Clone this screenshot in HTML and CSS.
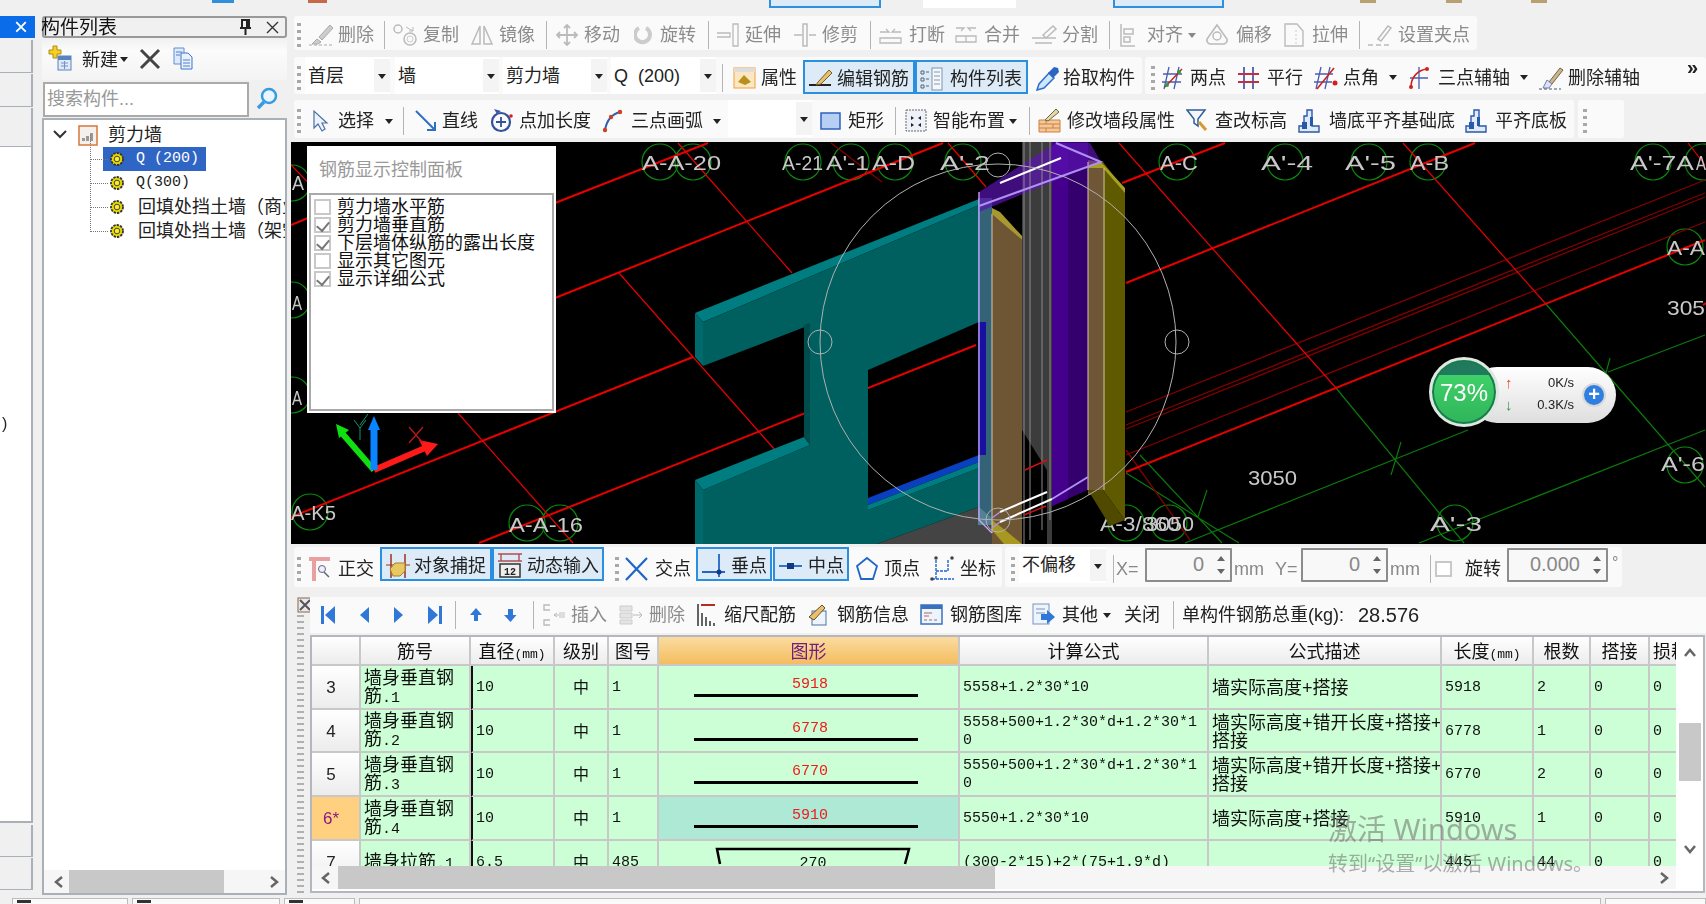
FILE: index.html
```html
<!DOCTYPE html>
<html lang="zh">
<head>
<meta charset="utf-8">
<title>构件列表</title>
<link rel="stylesheet" href="styles.css">
</head>
<body>
<svg class="defs" width="0" height="0">
  <symbol id="gear" viewBox="0 0 16 16"><circle cx="8" cy="8" r="6" fill="#e8d800" stroke="#333" stroke-width="1.800" stroke-dasharray="2.400 1"/><circle cx="8" cy="8" r="2.800" fill="#f7f020" stroke="#444"/></symbol>
</svg>
<div class="app">
  <div class="topstrip">
    <i class="tb-blue"></i><i class="tb-red"></i><i class="tb-sel a"></i><i class="tb-white"></i><i class="tb-sel b"></i><i class="tb-bit c"></i><i class="tb-bit d"></i><i class="tb-bit e"></i>
  </div>
  <div class="main">
    <div class="col-a">
      <div class="a-title"><span>×</span></div>
      <div class="a-box h33"></div>
      <div class="a-box h33"></div>
      <div class="a-box h39"></div>
      <div class="a-white"><span class="a-paren">)</span></div>
      <div class="a-box h32"></div>
      <div class="a-box h32"></div>
    </div>

    <div class="col-b">
      <div class="b-title"><span>构件列表</span>
        <svg width="16" height="18" viewBox="0 0 16 18" class="pin"><path d="M4 2h7v8H4zM2 10h11M7.500 10v7" fill="none" stroke="#222" stroke-width="2"/><path d="M8 3h2v6H8z" fill="#222"/></svg>
        <svg width="13" height="13" viewBox="0 0 13 13" class="closex"><path d="M1 1l11 11M12 1L1 12" stroke="#333" stroke-width="1.400"/></svg>
      </div>
      <div class="b-tools">
        <svg width="29" height="30" viewBox="0 0 29 30"><path d="M6 2h4v4h4v4h-4v4H6v-4H2V6h4z" fill="#f5d020" stroke="#b08a10"/><rect x="11" y="12" width="13" height="14" fill="#dfe9f7" stroke="#5a82bf"/><rect x="11" y="12" width="13" height="4" fill="#5a82bf"/><path d="M14 19h7M14 22h7M17.500 17v8" stroke="#6f93c8"/></svg>
        <span class="b-new">新建</span><i class="caret"></i>
        <svg class="b-x" width="22" height="24" viewBox="0 0 22 24"><path d="M2 3l18 18M20 3L2 21" stroke="#444" stroke-width="3"/></svg>
        <svg class="b-doc" width="24" height="24" viewBox="0 0 24 24"><path d="M2 1h10v16H2z" fill="#dfe9fb" stroke="#5f8fd0"/><path d="M9 6h7l4 4v12H9z" fill="#eaf1fd" stroke="#3f74c8"/><path d="M4 5h6M4 8h4M11 13h7M11 16h7M11 19h7" stroke="#4f80cc"/></svg>
      </div>
      <div class="b-search">
        <div class="search-box">搜索构件...</div>
        <svg width="24" height="26" viewBox="0 0 24 26"><circle cx="14" cy="10" r="7" fill="#eaf6ff" stroke="#3a9ae0" stroke-width="2.500"/><path d="M9 16l-6 6" stroke="#3a9ae0" stroke-width="3.500"/></svg>
      </div>
      <div class="tree">
        <div class="tree-body">
          <div class="root">
            <svg width="14" height="10" viewBox="0 0 14 10"><path d="M1 1l6 6 6-6" fill="none" stroke="#333" stroke-width="2"/></svg>
            <svg class="root-ic" width="21" height="21" viewBox="0 0 21 21"><rect x="1" y="1" width="18" height="19" fill="#f4f1ec" stroke="#d8773a" stroke-width="1.500"/><path d="M4 16h3v-3H4zM8 16h3v-5H8zM12 16h3v-8h-3zM5 11h2M9 7h2" fill="#999"/></svg>
            <span>剪力墙</span>
          </div>
          <div class="leaf sel"><svg width="16" height="16"><use href="#gear"/></svg><span class="mono">Q (200)</span></div>
          <div class="leaf"><svg width="16" height="16"><use href="#gear"/></svg><span class="mono">Q(300)</span></div>
          <div class="leaf wide"><svg width="16" height="16"><use href="#gear"/></svg><span>回填处挡土墙（商业）</span></div>
          <div class="leaf wide"><svg width="16" height="16"><use href="#gear"/></svg><span>回填处挡土墙（架空）</span></div>
        </div>
        <div class="hbar tree-bar">
          <svg width="12" height="14" viewBox="0 0 12 14"><path d="M9 2L3 7l6 5" fill="none" stroke="#666" stroke-width="2.500"/></svg>
          <i class="thumb"></i>
          <svg width="12" height="14" viewBox="0 0 12 14"><path d="M3 2l6 5-6 5" fill="none" stroke="#666" stroke-width="2.500"/></svg>
        </div>
      </div>
    </div>

    <div class="col-c">
      <div class="row row1">
        <div class="seg s1">
          <i class="grip"></i>
          <span class="t off m7"><svg width="30" height="24" viewBox="0 0 30 24"><path d="M11 14L22 2l3 3-11 12zM9 16l4 3-3 2H4z" fill="#ccc" stroke="#aaa"/><path d="M1 22h24" stroke="#aaa" stroke-dasharray="3 2"/></svg>删除</span>
          <i class="sep m10"></i>
          <span class="t off m7"><svg width="31" height="24" viewBox="0 0 31 24"><circle cx="6" cy="6" r="4" fill="none" stroke="#bbb" stroke-width="1.500"/><circle cx="18" cy="16" r="6" fill="none" stroke="#bbb" stroke-width="1.500"/><circle cx="18" cy="16" r="3" fill="none" stroke="#ccc"/><path d="M14 4l7 4M21 4v4h-4" fill="none" stroke="#bbb"/></svg>复制</span>
          <span class="t off m12"><svg width="28" height="24" viewBox="0 0 28 24"><path d="M1 21L9 3v18zM21 21L13 3v18z" fill="none" stroke="#bbb" stroke-width="1.500"/></svg>镜像</span>
          <i class="sep m11"></i>
          <span class="t off m9"><svg width="28" height="24" viewBox="0 0 28 24"><path d="M11 2v20M1 12h20M8 5l3-3 3 3M8 19l3 3 3-3M4 9l-3 3 3 3M18 9l3 3-3 3" fill="none" stroke="#bbb" stroke-width="1.800"/></svg>移动</span>
          <span class="t off m14"><svg width="26" height="24" viewBox="0 0 26 24"><path d="M5 5a7.500 7.500 0 1 0 7 0" fill="none" stroke="#ccc" stroke-width="4"/></svg>旋转</span>
          <i class="sep m12"></i>
          <span class="t off m8"><svg width="28" height="24" viewBox="0 0 28 24"><path d="M0 10h13v4H0M16 1h5v22h-5z" fill="none" stroke="#bbb" stroke-width="1.300"/></svg>延伸</span>
          <span class="t off m13"><svg width="28" height="24" viewBox="0 0 28 24"><path d="M9 1h4v22H9zM0 12h8M15 12h7" fill="none" stroke="#bbb" stroke-width="1.500"/></svg>修剪</span>
          <i class="sep m12"></i>
          <span class="t off m8"><svg width="30" height="24" viewBox="0 0 30 24"><path d="M1 9h9l-3-3M22 9h-9l3-3M1 15h21v5H1z" fill="none" stroke="#bbb" stroke-width="1.300"/></svg>打断</span>
          <span class="t off m10"><svg width="29" height="24" viewBox="0 0 29 24"><path d="M1 5h8l-3 3M21 5h-8l3 3M1 13h20v6H1zM11 13v6" fill="none" stroke="#bbb" stroke-width="1.300"/></svg>合并</span>
          <span class="t off m11"><svg width="31" height="24" viewBox="0 0 31 24"><path d="M1 15h24M4 20h17M12 12L22 3l3 3-10 9z" fill="none" stroke="#bbb" stroke-width="1.500"/></svg>分割</span>
          <i class="sep m11"></i>
          <span class="t off m10"><svg width="27" height="24" viewBox="0 0 27 24"><path d="M1 1v22h14M4 6h9v5H4zM4 14h6v5H4z" fill="none" stroke="#bbb" stroke-width="1.500"/></svg>对齐</span><i class="caret off-c m5"></i>
          <span class="t off m10"><svg width="30" height="24" viewBox="0 0 30 24"><path d="M11 2l10 14a4 4 0 0 1-3 5H4a4 4 0 0 1-3-5z" fill="none" stroke="#bbb" stroke-width="1.600"/><circle cx="11" cy="13" r="4" fill="none" stroke="#bbb" stroke-width="1.500"/></svg>偏移</span>
          <span class="t off m12"><svg width="28" height="24" viewBox="0 0 28 24"><path d="M1 1h12l6 7v15H1z" fill="none" stroke="#bbb" stroke-width="1.400"/><path d="M12 7v14" stroke="#ccc" stroke-dasharray="2 2"/></svg>拉伸</span>
          <i class="sep m11"></i>
          <span class="t off m8"><svg width="30" height="24" viewBox="0 0 30 24"><path d="M10 16L20 3l3 2-10 13zM0 22h5M8 22h5M16 22h5" fill="none" stroke="#bbb" stroke-width="1.500"/></svg>设置夹点</span>
        </div>
      </div>

      <div class="row row2">
        <div class="seg s2a">
          <i class="grip"></i>
          <span class="combo c85 m4">首层<i class="drop"></i></span>
          <span class="combo c104 m5">墙<i class="drop"></i></span>
          <span class="combo c104 m4">剪力墙<i class="drop"></i></span>
          <span class="combo c105 m4">Q&nbsp; (200)<i class="drop"></i></span>
          <i class="sep m6"></i>
          <span class="t m10"><svg width="28" height="24" viewBox="0 0 28 24"><rect x="1" y="2" width="21" height="20" fill="#fde7c0" stroke="#f0a040"/><rect x="1" y="2" width="21" height="4" fill="#ddd"/><path d="M5 16l6-7 7 7-6 3z" fill="#b89020"/></svg>属性</span>
          <span class="t btn w112 m6"><svg width="29" height="24" viewBox="0 0 29 24"><path d="M1 18h22" stroke="#222" stroke-width="2"/><path d="M10 15L21 3l3 3-11 11-5 1z" fill="#e5c070" stroke="#7a6020"/></svg>编辑钢筋</span>
          <span class="t btn w113"><svg width="30" height="24" viewBox="0 0 30 24"><rect x="12" y="1" width="10" height="22" fill="#f4f7fb" stroke="#7f94ae"/><path d="M14 5h6M14 9h6M14 13h6M14 17h6" stroke="#89a"/><path d="M1 4h3v3H1zM6 5h3M1 11h3v3H1zM6 12h3M1 18h3v3H1zM6 19h3" fill="none" stroke="#567"/></svg>构件列表</span>
          <span class="t m8"><svg width="27" height="26" viewBox="0 0 27 26"><path d="M1 25l2-6L13 8l5 5L8 23z" fill="#cfe6ff" stroke="#2f6fc8" stroke-width="1.500"/><path d="M12 8l6-6 4 1 1 4-6 6z" fill="#2a65c0"/></svg>拾取构件</span>
        </div>
        <div class="seg s2b">
          <i class="grip"></i>
          <span class="t m7"><svg width="28" height="24" viewBox="0 0 28 24"><path d="M7 1L2 23M17 1l-5 22M1 8h19M0 16h19" stroke="#4a5db0" stroke-width="1.300"/><path d="M20 3L3 21" stroke="#c52020" stroke-width="1.400"/><circle cx="17" cy="6" r="2" fill="#3a9a30"/><circle cx="5" cy="19" r="2" fill="#3a9a30"/></svg>两点</span>
          <span class="t m12"><svg width="29" height="24" viewBox="0 0 29 24"><path d="M6 1v22M15 1v22" stroke="#4a5db0" stroke-width="1.800"/><path d="M0 8h21M0 16h21" stroke="#c03040" stroke-width="1.800"/></svg>平行</span>
          <span class="t m11"><svg width="29" height="24" viewBox="0 0 29 24"><path d="M7 1L2 23M16 1l-5 22M1 8h18M0 16h18" stroke="#4a5db0" stroke-width="1.300"/><path d="M20 2L3 23" stroke="#d02020" stroke-width="1.600"/><circle cx="21" cy="17" r="2.500" fill="#d02020"/></svg>点角</span><i class="caret m10"></i>
          <span class="t m11"><svg width="30" height="24" viewBox="0 0 30 24"><path d="M11 1v22M2 12h18" stroke="#4a5db0" stroke-width="1.300"/><path d="M3 21C3 11 10 4 19 3" fill="none" stroke="#d02020" stroke-width="1.600"/><circle cx="19" cy="3" r="2" fill="#d02020"/><circle cx="3" cy="21" r="2" fill="#d02020"/></svg>三点辅轴</span><i class="caret m10"></i>
          <span class="t m10"><svg width="30" height="26" viewBox="0 0 30 26"><path d="M11 17L22 3l3 2-11 14z" fill="#c8b890" stroke="#806040"/><path d="M9 15l5 4-3 4H5z" fill="#e0e0f0" stroke="#6a80b0"/><path d="M1 24h22" stroke="#456" stroke-dasharray="3 2"/></svg>删除辅轴</span>
          <span class="more">»</span>
        </div>
      </div>

      <div class="row row3">
        <div class="seg s3a">
          <i class="grip"></i>
          <span class="t m12"><svg width="25" height="24" viewBox="0 0 25 24"><path d="M1 2v17l4-4 4 7 3-2-3-6h5z" fill="#eef3fb" stroke="#4a70a8" stroke-width="1.200"/></svg>选择</span><i class="caret m11"></i>
          <i class="sep m10"></i>
          <span class="t m11"><svg width="27" height="24" viewBox="0 0 27 24"><path d="M1 2l19 19M20 13v8h-8" fill="none" stroke="#2f6fc0" stroke-width="2"/></svg>直线</span>
          <span class="t m11"><svg width="30" height="26" viewBox="0 0 30 26"><circle cx="12" cy="14" r="9" fill="none" stroke="#33509a" stroke-width="2.200"/><path d="M12 9v10M7 14h10" stroke="#33509a" stroke-width="1.800"/><path d="M5 1l3 5 4-3" fill="#3a5aa8"/><circle cx="22" cy="8" r="1.800" fill="#d02020"/></svg>点加长度</span>
          <span class="t m11"><svg width="29" height="24" viewBox="0 0 29 24"><path d="M3 21C5 10 10 5 18 3" fill="none" stroke="#2f5fb0" stroke-width="2"/><circle cx="3" cy="21" r="2.200" fill="#d04020"/><circle cx="9" cy="8" r="2.200" fill="#d04020"/><circle cx="18" cy="3" r="2.200" fill="#d04020"/></svg>三点画弧</span><i class="caret m10"></i>
          <span class="combo c84 m7"><i class="drop"></i></span>
          <span class="t m7"><svg width="29" height="24" viewBox="0 0 29 24"><rect x="2" y="4" width="19" height="16" fill="#b8cff4" stroke="#2f60c0" stroke-width="1.500"/></svg>矩形</span>
          <i class="sep m11"></i>
          <span class="t m9"><svg width="28" height="24" viewBox="0 0 28 24"><rect x="1" y="1" width="20" height="21" fill="#eef2f8" stroke="#666" stroke-dasharray="2 1"/><path d="M6 7l3 2-3 2zM16 7l-3 2 3 2zM6 14l3 2-3 2zM16 14l-3 2 3 2z" fill="#223"/></svg>智能布置</span><i class="caret m4"></i>
          <i class="sep m12"></i>
          <span class="t m8"><svg width="29" height="26" viewBox="0 0 29 26"><path d="M1 12h21v12H1z" fill="#f4c89a" stroke="#d08040"/><path d="M1 16h21M1 20h21M8 12v4M15 16v4M8 20v4" stroke="#d08040"/><path d="M7 12L18 1l3 3-11 9z" fill="#e8d8a0" stroke="#665"/></svg>修改墙段属性</span>
          <span class="t m11"><svg width="29" height="26" viewBox="0 0 29 26"><path d="M1 2h18l-7 9v7l-4-3v-4z" fill="#f4f6fa" stroke="#2f5f9a" stroke-width="1.500"/><path d="M13 14l7 8" stroke="#d89830" stroke-width="3"/></svg>查改标高</span>
          <span class="t m11"><svg width="31" height="24" viewBox="0 0 31 24"><path d="M1 23v-6h5V7h3V1h5v16h7v6z" fill="#dfeafa" stroke="#2a58a8" stroke-width="1.400"/><path d="M4 13h5v7H4zM12 8h3v9h-3z" fill="#2a58a8"/></svg>墙底平齐基础底</span>
          <span class="t m10"><svg width="30" height="24" viewBox="0 0 30 24"><path d="M1 23v-6h5V7h3V1h5v16h7v6z" fill="#dfeafa" stroke="#2a58a8" stroke-width="1.400"/><path d="M4 13h5v7H4zM12 8h3v9h-3z" fill="#2a58a8"/></svg>平齐底板</span>
        </div>
        <div class="seg s3b"><i class="grip"></i></div>
      </div>

      <div class="canvas">
        <svg class="cad" width="1415" height="402" viewBox="291 142 1415 402">
          <g class="hex" fill="none" stroke="#0a8a0a" stroke-width="1.200">
            <circle cx="660" cy="162" r="18"/><circle cx="693" cy="162" r="18"/><circle cx="803" cy="162" r="18"/><circle cx="851" cy="162" r="18"/><circle cx="895" cy="162" r="18"/><circle cx="963" cy="162" r="18"/><circle cx="1177" cy="162" r="18"/><circle cx="1285" cy="162" r="18"/><circle cx="1369" cy="162" r="18"/><circle cx="1428" cy="162" r="18"/><circle cx="1653" cy="162" r="18"/><circle cx="1703" cy="162" r="18"/><circle cx="1685" cy="247" r="18"/><circle cx="1685" cy="465" r="18"/><circle cx="1455" cy="523" r="18"/><circle cx="1126" cy="523" r="18"/><circle cx="1169" cy="523" r="18"/><circle cx="527" cy="523" r="18"/><circle cx="560" cy="523" r="18"/><circle cx="310" cy="512" r="18"/><circle cx="292" cy="183" r="18"/><circle cx="292" cy="300" r="18"/><circle cx="292" cy="395" r="18"/>
          </g>
          <g fill="none" stroke="#0a7a0a" stroke-width="1.200">
            <path d="M1185 543L1468 430M1608 372L1705 335M1419 543L1705 430M1336 388L1464 543M1545 303L1705 487M1126 473L1239 543M1401 442L1391 475M1610 358L1606 373M1207 490L1198 517M1140 455L1222 543"/>
          </g>
          <g fill="none" stroke="#800000" stroke-width="1.300">
            <path d="M1126 412L1705 180M1126 425L1705 193M1126 429L1705 197M1126 455L1705 222M831 143L882 182M1126 450L1190 540"/>
          </g>
          <g fill="none" stroke="#e60000" stroke-width="2">
            <path d="M291 225L320 213M555 203L708 143M555 298L943 143M291 517L693 357M479 543L976 345M1122 183L1225 143M1126 283L1475 143M1126 472L1705 240M1703 305L1706 303"/>
          </g>
          <g fill="none" stroke="#e60000" stroke-width="1.200">
            <path d="M678 143L792 273M458 413L573 543M619 273L775 450M948 143L986 187M1119 143L1336 388M1403 143L1545 303M291 165L330 205M1688 143L1705 165"/>
          </g>
          <g class="lbl">
            <text x="642" y="170" textLength="79" lengthAdjust="spacingAndGlyphs">A-A-20</text>
            <text x="782" y="170" textLength="41" lengthAdjust="spacingAndGlyphs">A-21</text>
            <text x="826" y="170" textLength="43" lengthAdjust="spacingAndGlyphs">A'-1</text>
            <text x="872" y="170" textLength="43" lengthAdjust="spacingAndGlyphs">A-D</text>
            <text x="940" y="170" textLength="50" lengthAdjust="spacingAndGlyphs">A'-2</text>
            <text x="1160" y="170" textLength="38" lengthAdjust="spacingAndGlyphs">A-C</text>
            <text x="1261" y="170" textLength="52" lengthAdjust="spacingAndGlyphs">A'-4</text>
            <text x="1345" y="170" textLength="51" lengthAdjust="spacingAndGlyphs">A'-5</text>
            <text x="1410" y="170" textLength="39" lengthAdjust="spacingAndGlyphs">A-B</text>
            <text x="1630" y="170" textLength="64" lengthAdjust="spacingAndGlyphs">A'-7A</text>
            <text x="1696" y="170" textLength="10" lengthAdjust="spacingAndGlyphs">A</text>
            <text x="1667" y="255" textLength="38" lengthAdjust="spacingAndGlyphs">A-A</text>
            <text x="1667" y="315" textLength="38" lengthAdjust="spacingAndGlyphs">305</text>
            <text x="1661" y="471" textLength="44" lengthAdjust="spacingAndGlyphs">A'-6</text>
            <text x="1248" y="485" textLength="49" lengthAdjust="spacingAndGlyphs">3050</text>
            <text x="1100" y="531" textLength="80" lengthAdjust="spacingAndGlyphs">A-3/860</text>
            <text x="1146" y="531" textLength="48" lengthAdjust="spacingAndGlyphs">3050</text>
            <text x="1430" y="531" textLength="52" lengthAdjust="spacingAndGlyphs">A'-3</text>
            <text x="291" y="520" textLength="45" lengthAdjust="spacingAndGlyphs">A-K5</text>
            <text x="509" y="532" textLength="74" lengthAdjust="spacingAndGlyphs">A-A-16</text>
            <text x="292" y="190" textLength="12" lengthAdjust="spacingAndGlyphs">A</text>
            <text x="292" y="310" textLength="10" lengthAdjust="spacingAndGlyphs">A</text>
            <text x="292" y="405" textLength="10" lengthAdjust="spacingAndGlyphs">A</text>
          </g>
          <path d="M695 313L979 199V205L703 322Z" fill="#007d80"/>
          <path d="M703 322L979 205V322L868 370V510L979 468V507L877 544H703V490L810 445V325L703 366Z" fill="#005f5f"/>
          <path d="M695 313L703 322V366L695 357Z" fill="#00696b"/>
          <path d="M695 480L804 437L810 445L703 490Z" fill="#007d80"/>
          <path d="M695 480L703 490V544H695Z" fill="#00696b"/>
          <path d="M804 325L810 323V445L804 437Z" fill="#004c4d"/>
          <path d="M868 498L979 455V462L868 505Z" fill="#0a3fc0"/>
          <path d="M868 505L979 462V468L868 510Z" fill="#007d80"/>
          <path d="M877 544L979 507L1022 544Z" fill="#444"/>
          <path d="M1022 142H1052V544H1022Z" fill="#3c3c3c"/>
          <path d="M1022 430L1047 470V544H1022Z" fill="#000"/>
          <path d="M1052 142H1088V490L1052 506Z" fill="#34006e"/>
          <path d="M1052 142H1068V499L1052 506Z" fill="#44008c"/>
          <path d="M978 198H992V525H978Z" fill="#5fb4d8" fill-opacity=".55"/>
          <path d="M978 322H986V455H978Z" fill="#1a10a0"/>
          <path d="M992 212L1022 240V544H992Z" fill="#6e5533"/>
          <path d="M992 208L1000 212L1022 236V240L992 214Z" fill="#a89830"/>
          <path d="M992 520L1005 530L1022 544H1004L992 530Z" fill="#a89820"/>
          <path d="M1103 162L1125 190V520L1103 490Z" fill="#5f5a00"/>
          <path d="M1088 163H1103V495H1088Z" fill="#6e5636"/>
          <path d="M1088 160L1101 162L1125 188V193L1103 168H1088Z" fill="#a8a020"/>
          <path d="M1088 490L1103 490L1125 520L1110 526Z" fill="#4f4a00"/>
          <path d="M979 192L1056 143H1090L1101 162L979 212Z" fill="#5a12b0" fill-opacity=".7"/>
          <g fill="none">
            <path d="M1024 142V544M1030 142V540M1042 142V530M1050 142V520" stroke="#8a8a8a" stroke-width="1"/>
            <path d="M979 192V520L992 533" stroke="#c8a8ff" stroke-width="1.300"/>
            <path d="M992 214V533M1088 162V490M1104 168V490" stroke="#d8c8b0" stroke-width="1"/>
            <path d="M1000 183L1061 158" stroke="#fff" stroke-width="2"/>
            <path d="M979 206L1101 162L1056 143" stroke="#b090f0" stroke-width="2"/>
            <path d="M1000 512L1047 492" stroke="#fff" stroke-width="2"/>
            <path d="M1000 522L1052 499" stroke="#fff" stroke-width="2"/>
            <path d="M1052 499L1088 477" stroke="#b090f0" stroke-width="2"/>
            <path d="M992 518L1000 512M992 528L1000 522" stroke="#b090f0" stroke-width="1.500"/>
            <path d="M1024 515L1046 506M1025 470L1047 460" stroke="#d01010" stroke-width="1.400"/>
          </g>
          <g fill="none" stroke="#b0b0b0" stroke-width="1">
            <circle cx="998" cy="342" r="178"/>
            <circle cx="820" cy="342" r="12"/><circle cx="1177" cy="342" r="12"/>
            <circle cx="998" cy="165" r="12"/><circle cx="998" cy="520" r="12"/>
          </g>
          <path d="M374 470L341 432" stroke="#10e010" stroke-width="6"/><path d="M336 424L349 430L339 438Z" fill="#10e010"/>
          <path d="M374 470L425 448" stroke="#ff1a1a" stroke-width="6"/><path d="M438 444L419 440L427 456Z" fill="#ff1a1a"/>
          <path d="M374 470V428" stroke="#0a84ff" stroke-width="7"/><path d="M374 416L368 430H380Z" fill="#0a84ff"/>
          <path d="M409 427L423 443M423 427L409 443" stroke="#c01818" stroke-width="1.200"/>
          <path d="M354 420L360 428V440M366 420L360 428M368 414L360 425" fill="none" stroke="#0a9a70" stroke-width="1"/>
        </svg>

        <div class="panel">
          <div class="panel-title">钢筋显示控制面板</div>
          <div class="panel-list">
            <div class="chk"><i class="box"></i>剪力墙水平筋</div>
            <div class="chk"><i class="box on"></i>剪力墙垂直筋</div>
            <div class="chk"><i class="box on"></i>下层墙体纵筋的露出长度</div>
            <div class="chk"><i class="box"></i>显示其它图元</div>
            <div class="chk"><i class="box on"></i>显示详细公式</div>
          </div>
        </div>

        <div class="net">
          <div class="ball"><span>73%</span></div>
          <div class="speeds">
            <div class="sp"><b class="up">↑</b><span>0K/s</span></div>
            <div class="sp"><b class="dn">↓</b><span>0.3K/s</span></div>
          </div>
          <div class="plus">+</div>
        </div>
      </div>

      <div class="row row4">
        <div class="seg s4a">
          <i class="grip"></i>
          <span class="t m7"><svg width="30" height="26" viewBox="0 0 30 26"><path d="M1 3h21M6 3v22" stroke="#e8a0a0" stroke-width="4"/><circle cx="14" cy="13" r="3.500" fill="#eef" stroke="#667"/><path d="M16 16l5 5" stroke="#667" stroke-width="1.500"/></svg>正交</span>
          <span class="t btn w112 m6"><svg width="29" height="26" viewBox="0 0 29 26"><path d="M6 1v24M20 1v24" stroke="#a03020" stroke-width="1.500"/><path d="M1 12h24" stroke="#a03020"/><path d="M5 16l5-6h10v8l-5 5H8z" fill="#e8c860" stroke="#a08030"/></svg>对象捕捉</span>
          <span class="t btn w112"><svg width="30" height="26" viewBox="0 0 30 26"><path d="M1 1h24M1 8h24M4 1v7M22 1v7" stroke="#b05050" stroke-width="1.400"/><rect x="3" y="11" width="20" height="13" fill="#eee" stroke="#333" stroke-width="1.500"/><text x="7" y="22" class="svg12">12</text></svg>动态输入</span>
          <i class="grip m11"></i>
          <span class="t m6"><svg width="30" height="26" viewBox="0 0 30 26"><path d="M1 2l21 22M22 2L1 24" stroke="#1f66c8" stroke-width="2.200"/></svg>交点</span>
          <span class="t btn w76 m5"><svg width="30" height="26" viewBox="0 0 30 26"><path d="M1 19h23M18 1v23" stroke="#1f66c8" stroke-width="1.800"/><circle cx="18" cy="19" r="2.500" fill="#123a80"/></svg>垂点</span>
          <span class="t btn w76 m1"><svg width="30" height="26" viewBox="0 0 30 26"><path d="M1 13h23" stroke="#1f66c8" stroke-width="1.800"/><rect x="9" y="10" width="7" height="6" fill="#123a80"/></svg>中点</span>
          <span class="t m6"><svg width="29" height="26" viewBox="0 0 29 26"><path d="M12 2l10 8-4 13H6L2 10z" fill="none" stroke="#1f66c8" stroke-width="1.800"/></svg>顶点</span>
          <span class="t m10"><svg width="30" height="26" viewBox="0 0 30 26"><path d="M6 4v19M18 4v11M2 23h22M6 15h12" fill="none" stroke="#1f66c8" stroke-width="1.400" stroke-dasharray="3 1"/><circle cx="6" cy="2" r="1.800" fill="#444"/><circle cx="22" cy="2" r="1.800" fill="#444"/><circle cx="2" cy="23" r="1.800" fill="#444"/></svg>坐标</span>
        </div>
        <div class="seg s4b">
          <i class="grip"></i>
          <span class="combo c87 m4">不偏移<i class="drop"></i></span>
          <i class="sep m7"></i>
          <span class="lat w26 m2">X=</span>
          <span class="spin w87 m3"><span>0</span><i class="arrows"></i></span>
          <span class="lat w33 m2">mm</span>
          <span class="lat w22 m8">Y=</span>
          <span class="spin w87 m4"><span>0</span><i class="arrows"></i></span>
          <span class="lat w32 m2">mm</span>
          <i class="sep m8"></i>
          <i class="box m4"></i>
          <span class="txt m13">旋转</span>
          <span class="spin w101 m6"><span>0.000</span><i class="arrows"></i></span>
          <span class="deg">°</span>
        </div>
      </div>

      <div class="lower">
        <div class="lower-side">
          <svg width="16" height="16" viewBox="0 0 16 16"><rect x="1" y="1" width="14" height="14" fill="#e8e8ee" stroke="#864"/><path d="M3 3l10 10M13 3L3 13" stroke="#555" stroke-width="2"/></svg>
          <i class="side-grip"></i>
        </div>
        <div class="lower-main">
          <div class="bar5">
            <svg class="m10" width="15" height="22" viewBox="0 0 15 22"><path d="M1 2h3v18H1zM15 2v18L5 11z" fill="#2f78d8"/></svg>
            <svg class="m24" width="11" height="22" viewBox="0 0 11 22"><path d="M10 3v16L1 11z" fill="#2f78d8"/></svg>
            <svg class="m23" width="10" height="22" viewBox="0 0 10 22"><path d="M1 3v16l9-8z" fill="#2f78d8"/></svg>
            <svg class="m25" width="14" height="22" viewBox="0 0 14 22"><path d="M14 2h-3v18h3zM0 2v18l10-9z" fill="#2f78d8"/></svg>
            <i class="sep m13"></i>
            <svg class="m14" width="12" height="22" viewBox="0 0 12 22"><path d="M6 4l6 7H8v6H4v-6H0z" fill="#2f78d8"/></svg>
            <svg class="m22" width="13" height="22" viewBox="0 0 13 22"><path d="M6.500 18l6-7H9V5H4v6H0z" fill="#2f78d8"/></svg>
            <i class="sep m16"></i>
            <span class="t off m8"><svg width="29" height="24" viewBox="0 0 29 24"><path d="M8 2H2v5h6M8 17H2v5h6" fill="none" stroke="#bbb" stroke-width="1.400"/><path d="M12 12h10M15 10l-3 2 3 2" stroke="#bbb" fill="none"/><rect x="17" y="9" width="6" height="6" fill="#ddd"/></svg>插入</span>
            <span class="t off m11"><svg width="31" height="24" viewBox="0 0 31 24"><path d="M2 3h12v5H2zM2 10h12v5H2zM2 17h12v4H2z" fill="#e4e4e4" stroke="#ccc"/><path d="M15 12h9M21 9l3 3-3 3" stroke="#bbb" fill="none"/></svg>删除</span>
            <span class="t m12"><svg width="27" height="24" viewBox="0 0 27 24"><path d="M4 2h14" stroke="#b03020" stroke-width="2"/><path d="M1 1v22M5 10v13M9 14v9M13 18v5M17 20v3" stroke="#333" stroke-width="1.500"/></svg>缩尺配筋</span>
            <span class="t m12"><svg width="29" height="24" viewBox="0 0 29 24"><rect x="4" y="8" width="14" height="14" fill="#eef4fb" stroke="#4a70a8"/><path d="M1 14L14 2l3 3L6 17z" fill="#e8c070" stroke="#6a5020"/></svg>钢筋信息</span>
            <span class="t m11"><svg width="30" height="24" viewBox="0 0 30 24"><rect x="1" y="2" width="21" height="19" fill="#eef4fb" stroke="#3a70c0" stroke-width="1.500"/><rect x="1" y="2" width="21" height="4" fill="#3a70c0"/><path d="M4 10h8M4 13h5M4 17h3M9 17h3M14 17h3" stroke="#a66"/></svg>钢筋图库</span>
            <span class="t m10"><svg width="30" height="24" viewBox="0 0 30 24"><rect x="1" y="1" width="16" height="20" fill="#eef4fb" stroke="#7a94c0"/><path d="M4 6h9M4 10h9" stroke="#7a94c0"/><path d="M9 11h6V7l8 7-8 7v-4H9z" fill="#2f78d8"/></svg>其他</span><i class="caret m5"></i>
            <span class="txt m13">关闭</span>
            <i class="sep m13"></i>
            <span class="txt m8">单构件钢筋总重(kg):</span>
            <span class="txt total">28.576</span>
          </div>
          <div class="grid-frame">
            <div class="grid-view">
              <table class="grid">
                <colgroup><col class="k1"><col class="k2"><col class="k3"><col class="k4"><col class="k5"><col class="k6"><col class="k7"><col class="k8"><col class="k9"><col class="k10"><col class="k11"><col class="k12"></colgroup>
                <thead><tr><th></th><th>筋号</th><th>直径<span class="mm">(mm)</span></th><th>级别</th><th>图号</th><th class="hot">图形</th><th>计算公式</th><th>公式描述</th><th>长度<span class="mm">(mm)</span></th><th>根数</th><th>搭接</th><th class="clip">损耗</th></tr></thead>
                <tbody>
                  <tr class="h44"><th class="idx">3</th><td class="name">墙身垂直钢<br>筋<span class="mono">.1</span></td><td class="mono thick">10</td><td class="ctr gr">中</td><td class="mono">1</td><td class="shape"><span class="len">5918</span><i class="rod"></i></td><td class="mono">5558+1.2*30*10</td><td class="desc">墙实际高度+搭接</td><td class="mono">5918</td><td class="mono">2</td><td class="mono">0</td><td class="mono">0</td></tr>
                  <tr class="h43"><th class="idx">4</th><td class="name">墙身垂直钢<br>筋<span class="mono">.2</span></td><td class="mono thick">10</td><td class="ctr gr">中</td><td class="mono">1</td><td class="shape"><span class="len">6778</span><i class="rod"></i></td><td class="mono lh18">5558+500+1.2*30*d+1.2*30*1<br>0</td><td class="desc">墙实际高度+错开长度+搭接+<br>搭接</td><td class="mono">6778</td><td class="mono">1</td><td class="mono">0</td><td class="mono">0</td></tr>
                  <tr class="h44"><th class="idx">5</th><td class="name">墙身垂直钢<br>筋<span class="mono">.3</span></td><td class="mono thick">10</td><td class="ctr gr">中</td><td class="mono">1</td><td class="shape"><span class="len">6770</span><i class="rod"></i></td><td class="mono lh18">5550+500+1.2*30*d+1.2*30*1<br>0</td><td class="desc">墙实际高度+错开长度+搭接+<br>搭接</td><td class="mono">6770</td><td class="mono">2</td><td class="mono">0</td><td class="mono">0</td></tr>
                  <tr class="h44"><th class="idx cur">6*</th><td class="name">墙身垂直钢<br>筋<span class="mono">.4</span></td><td class="mono thick">10</td><td class="ctr gr">中</td><td class="mono">1</td><td class="shape act"><span class="len">5910</span><i class="rod"></i></td><td class="mono">5550+1.2*30*10</td><td class="desc">墙实际高度+搭接</td><td class="mono">5910</td><td class="mono">1</td><td class="mono">0</td><td class="mono">0</td></tr>
                  <tr class="h44"><th class="idx">7</th><td class="name">墙身拉筋<span class="mono">.1</span></td><td class="mono thick">6.5</td><td class="ctr gr">中</td><td class="mono">485</td><td class="shape hook"><svg width="196" height="22" viewBox="0 0 196 22"><path d="M5 19L2 4H194L190 19" fill="none" stroke="#000" stroke-width="2.500"/><text x="98" y="22" class="svg270">270</text></svg></td><td class="mono">(300-2*15)+2*(75+1.9*d)</td><td class="desc"></td><td class="mono">445</td><td class="mono">44</td><td class="mono">0</td><td class="mono">0</td></tr>
                </tbody>
              </table>
            </div>
            <div class="vbar">
              <svg width="14" height="12" viewBox="0 0 14 12"><path d="M2 9l5-6 5 6" fill="none" stroke="#666" stroke-width="2.500"/></svg>
              <i class="vthumb"></i>
              <svg class="vdown" width="14" height="12" viewBox="0 0 14 12"><path d="M2 3l5 6 5-6" fill="none" stroke="#666" stroke-width="2.500"/></svg>
            </div>
            <div class="hbar grid-bar">
              <svg width="12" height="14" viewBox="0 0 12 14"><path d="M9 2L3 7l6 5" fill="none" stroke="#666" stroke-width="2.500"/></svg>
              <i class="gthumb"></i>
              <svg width="12" height="14" viewBox="0 0 12 14"><path d="M3 2l6 5-6 5" fill="none" stroke="#666" stroke-width="2.500"/></svg>
            </div>
          </div>
        </div>
      </div>
    </div>
  </div>
  <div class="tabs">
    <span class="tab w116"><i></i></span><span class="tab w148"><i></i></span><span class="tab w71"><i></i></span><span class="tab w1243"></span><span class="tab w101"></span>
  </div>
  <div class="activate">
    <div class="act1">激活 Windows</div>
    <div class="act2">转到“设置”以激活 Windows。</div>
  </div>
</div>
</body>
</html>
```

FILE: styles.css
```css
* { box-sizing: border-box; }
html, body { margin: 0; height: 100%; overflow: hidden; background: #f0f0f0; }
body { font-family: "Liberation Sans", "Noto Sans CJK SC", sans-serif; font-size: 18px; line-height: 24px; color: #222; }
.defs { position: absolute; }
i { display: block; font-style: normal; flex: none; }
svg { display: block; flex: none; }
.app { position: relative; width: 1706px; height: 904px; filter: blur(.35px); }
.mono { font-family: "Liberation Mono", "Noto Sans CJK SC", monospace; font-size: 15px; }

/* spacing helpers */
.m1{margin-left:1px}.m2{margin-left:2px}.m3{margin-left:3px}.m4{margin-left:4px}.m5{margin-left:5px}.m6{margin-left:6px}.m7{margin-left:7px}.m8{margin-left:8px}.m9{margin-left:9px}.m10{margin-left:10px}.m11{margin-left:11px}.m12{margin-left:12px}.m13{margin-left:13px}.m14{margin-left:14px}.m16{margin-left:16px}.m22{margin-left:22px}.m23{margin-left:23px}.m24{margin-left:24px}.m25{margin-left:25px}

/* top strip */
.topstrip { height: 16px; display: flex; align-items: flex-start; }
.tb-blue { width: 22px; height: 3px; margin-left: 212px; background: #2f8fdc; }
.tb-red { width: 19px; height: 3px; margin-left: 74px; background: #c8684a; }
.tb-sel { height: 8px; background: #dcebf7; border: 2px solid #2f90e0; border-top: 0; }
.tb-sel.a { width: 112px; margin-left: 442px; }
.tb-sel.b { width: 111px; margin-left: 97px; }
.tb-white { width: 93px; height: 8px; margin-left: 42px; background: #fff; }
.tb-bit { width: 16px; height: 3px; background: #b8a070; }
.tb-bit.c { margin-left: 136px; }
.tb-bit.d { margin-left: 70px; }
.tb-bit.e { margin-left: 69px; }

.main { display: flex; height: 881px; }

/* far-left strip */
.col-a { width: 35px; display: flex; flex-direction: column; flex: none; }
.a-title { height: 22px; background: #0a6ce8; color: #fff; font-size: 24px; line-height: 21px; text-align: right; padding-right: 7px; margin-bottom: 2px; }
.a-box { width: 33px; background: #f0f0f0; border-right: 2px solid #a9b0b8; border-bottom: 1px solid #a9b0b8; margin-bottom: 1px; }
.h33 { height: 33px; }
.h39 { height: 39px; margin-bottom: 0; }
.h32 { height: 32px; }
.a-white { position: relative; width: 33px; height: 676px; background: #fff; border-right: 2px solid #a9b0b8; border-bottom: 2px solid #a9b0b8; margin-bottom: 2px; }
.a-paren { position: absolute; left: 2px; top: 265px; font-size: 16px; }

/* component list */
.col-b { width: 245px; margin-left: 7px; flex: none; display: flex; flex-direction: column; }
.b-title { height: 22px; display: flex; align-items: center; background: #f0f0f0; border: 2px solid #999; border-radius: 3px; font-size: 19px; line-height: 20px; color: #111; }
.b-title span { margin-right: auto; margin-left: -3px; padding-top: 1px; }
.pin { margin-right: 12px; }
.closex { margin-right: 6px; }
.b-tools { height: 42px; display: flex; align-items: center; padding-left: 5px; background: linear-gradient(#f0f0f0, #fbfbfb 30%, #f4f4f4); }
.b-new { margin-left: 6px; padding-top: 2px; }
.b-tools .caret { margin-left: 2px; }
.b-x { margin-left: 11px; }
.b-doc { margin-left: 11px; }
.b-search { height: 38px; display: flex; align-items: center; padding-left: 1px; }
.search-box { width: 206px; height: 35px; background: #fff; border: 2px solid #aaa; color: #999; line-height: 30px; padding-left: 2px; margin-right: 6px; }
.tree { flex: 1; border: 2px solid #a9b0b8; background: #fff; display: flex; flex-direction: column; height: 772px; margin-bottom: 2px; overflow: hidden; }
.tree-body { flex: 1; padding-top: 3px; position: relative; }
.root { display: flex; align-items: center; height: 24px; padding-left: 9px; white-space: nowrap; }
.root-ic { margin-left: 11px; }
.root span { margin-left: 9px; }
.leaf { position: relative; display: flex; align-items: center; width: 220px; height: 24px; margin-left: 59px; padding-left: 6px; white-space: nowrap; color: #222; }
.leaf::before { content: ""; position: absolute; left: -13px; top: -12px; width: 17px; height: 24px; border-left: 1px dotted #777; border-bottom: 1px dotted #777; }
.leaf svg { margin-right: 11px; }
.leaf.wide svg { margin-right: 13px; }
.leaf.sel { width: 103px; background: #2f66c5; color: #fff; }
.hbar { display: flex; align-items: center; background: #f6f6f6; }
.tree-bar { height: 23px; padding: 0 5px 0 9px; flex: none; }
.thumb { width: 155px; height: 23px; margin: 0 auto 0 4px; background: #c8c8c8; }

/* toolbars */
.col-c { width: 1415px; margin-left: 4px; flex: none; display: flex; flex-direction: column; }
.row { display: flex; flex: none; }
.row1 { height: 34px; padding-left: 3px; margin-bottom: 7px; }
.row2 { height: 37px; padding-left: 3px; margin-bottom: 6px; gap: 3px; }
.row3 { height: 38px; padding-left: 3px; margin-bottom: 4px; gap: 4px; }
.row4 { height: 40px; padding-left: 3px; margin-top: 3px; gap: 3px; }
.seg { display: flex; align-items: center; background: #fafafa; border-radius: 3px; padding: 4px 0 0 3px; white-space: nowrap; }
.s1 { width: 1183px; }
.s2a { width: 848px; }
.s2b { flex: 1; padding-left: 6px; position: relative; }
.s3a { width: 1280px; }
.s3b { width: 46px; padding-left: 5px; }
.s4a { width: 708px; }
.s4b { width: 617px; padding-left: 6px; }
.grip { width: 4px; height: 24px; background: repeating-linear-gradient(#a8a8a8 0 3px, transparent 3px 7px); }
.sep { width: 1px; height: 28px; background: #b4b4b4; }
.t { display: inline-flex; align-items: center; flex: none; line-height: 24px; color: #222; }
.off { color: #8c8c8c; }
.txt { flex: none; color: #222; }
.total { margin-left: 14px; font-size: 20px; }
.caret { width: 0; height: 0; border-left: 4px solid transparent; border-right: 4px solid transparent; border-top: 5px solid #222; }
.off-c { border-top-color: #888; }
.combo { position: relative; flex: none; align-self: flex-start; height: 37px; margin-top: -4px; background: #fff; line-height: 39px; padding-left: 3px; color: #222; }
.c85 { width: 85px; } .c104 { width: 104px; } .c105 { width: 105px; } .c84 { width: 84px; } .c87 { width: 87px; height: 36px; line-height: 37px; }
.drop { position: absolute; right: 0; top: 2px; bottom: 2px; width: 16px; background: #f4f4f4; }
.drop::after { content: ""; position: absolute; left: 4px; top: 15px; border-left: 4px solid transparent; border-right: 4px solid transparent; border-top: 5px solid #222; }
.btn { height: 34px; padding: 4px 0 0 3px; background: #dcebf7; border: 2px solid #2a8fe0; }
.w112 { width: 112px; } .w113 { width: 113px; } .w76 { width: 76px; } .w26 { width: 26px; } .w33 { width: 33px; } .w22 { width: 22px; } .w32 { width: 32px; } .w87 { width: 87px; } .w101 { width: 101px; }
.row2 .btn { align-self: flex-end; }
.row4 .btn { margin-top: -10px; }
.more { position: absolute; right: 8px; top: -2px; font-size: 20px; font-weight: bold; line-height: 24px; }
.lat { flex: none; color: #888; white-space: nowrap; }
.spin { position: relative; flex: none; height: 34px; background: #f8f8f8; border: 2px solid #8c8c8c; border-radius: 1px; color: #888; text-align: right; padding-right: 26px; font-size: 20px; line-height: 28px; margin-top: -8px; }
.arrows { position: absolute; right: 5px; top: 6px; width: 8px; height: 18px; }
.arrows::before { content: ""; position: absolute; left: 0; top: 0; border-left: 4px solid transparent; border-right: 4px solid transparent; border-bottom: 5px solid #666; }
.arrows::after { content: ""; position: absolute; left: 0; bottom: 0; border-left: 4px solid transparent; border-right: 4px solid transparent; border-top: 5px solid #666; }
.deg { margin-left: 4px; color: #888; font-size: 16px; margin-top: -12px; }
.box { position: relative; width: 17px; height: 16px; background: #fff; border: 2px solid #c8c8c8; }
.box.on::after { content: ""; position: absolute; left: 3px; top: 0; width: 6px; height: 10px; border: solid #777; border-width: 0 2px 2px 0; transform: rotate(40deg); }

/* drawing area */
.canvas { position: relative; height: 402px; background: #000; flex: none; overflow: hidden; }
.cad { position: absolute; left: 0; top: 0; }
.lbl text { font-family: "Liberation Sans", sans-serif; font-size: 21px; fill: #c8c8c8; }
.panel { position: absolute; left: 16px; top: 4px; width: 249px; height: 267px; background: #fff; }
.panel-title { height: 47px; padding: 12px 0 0 12px; color: #999; line-height: 24px; }
.panel-list { height: 218px; margin: 0 2px; border: 2px solid #a9a9a9; padding-top: 3px; }
.chk { display: flex; align-items: center; height: 18px; font-size: 18px; line-height: 18px; color: #111; white-space: nowrap; padding-left: 3px; }
.chk .box { margin-right: 6px; }
.net { position: absolute; left: 1138px; top: 215px; width: 187px; height: 70px; }
.net::before { content: ""; position: absolute; left: 40px; right: 0; top: 10px; height: 56px; border-radius: 28px; background: linear-gradient(#fff, #dedede); }
.ball { position: absolute; left: 0; top: 0; width: 70px; height: 70px; border-radius: 50%; border: 3px solid #dfe8e0; background: linear-gradient(#1f7a5e 0 24%, #3fd068 24%, #2fb45a); color: #fff; font-size: 24px; line-height: 66px; text-align: center; box-shadow: inset 0 0 0 2px #1a7a50; }
.speeds { position: absolute; left: 76px; top: 15px; width: 69px; }
.sp { display: flex; justify-content: space-between; height: 22px; font-size: 13px; line-height: 22px; color: #222; }
.sp b { font-size: 15px; }
.up { color: #e85030; }
.dn { color: #2f9a4a; }
.plus { position: absolute; left: 153px; top: 26px; width: 24px; height: 24px; border-radius: 50%; background: #2f7fe0; border: 2px solid #d8d8d8; color: #fff; font-weight: bold; font-size: 20px; line-height: 19px; text-align: center; }

/* lower section */
.lower { display: flex; flex: none; margin-top: 10px; height: 296px; }
.lower-side { width: 19px; padding: 0 0 0 6px; flex: none; display: flex; flex-direction: column; gap: 2px; }
.side-grip { width: 7px; flex: 1; background: repeating-linear-gradient(#b0b0b0 0 2px, transparent 2px 6px); }
.lower-main { flex: 1; display: flex; flex-direction: column; }
.bar5 { height: 36px; display: flex; align-items: center; background: #fafafa; white-space: nowrap; flex: none; }
.grid-frame { margin-top: 2px; width: 1395px; height: 258px; border: 2px solid #b4b8bc; display: grid; grid-template-columns: 1364px 1fr; grid-template-rows: 229px 23px; background: #fff; }
.grid-view { overflow: hidden; background: #fff; }
.grid { width: 1364px; table-layout: fixed; border-collapse: separate; border-spacing: 0; }
.k1{width:49px}.k2{width:110px}.k3{width:84px}.k4{width:54px}.k5{width:50px}.k6{width:301px}.k7{width:249px}.k8{width:233px}.k9{width:92px}.k10{width:57px}.k11{width:59px}.k12{width:26px}
.grid th, .grid td { padding: 0 3px; border-right: 2px solid #c8c8c8; border-bottom: 2px solid #c8c8c8; font-weight: normal; overflow: hidden; white-space: nowrap; }
.grid thead tr { height: 29px; }
.grid thead th { height: 29px; padding-top: 2px; line-height: 22px; text-align: center; color: #111; background: linear-gradient(#fff, #ececec); }
.grid thead th.hot { background: linear-gradient(#fbdca0, #f3bd5f); color: #702080; }
.grid thead th.clip { text-align: left; border-right: 0; }
.mm { font-family: "Liberation Mono", monospace; font-size: 13px; line-height: 16px; }
.h44 { height: 44px; }
.h43 { height: 43px; }
.grid td { background: #ccffd5; color: #111; line-height: 18px; padding-top: 2px; }
.grid td:last-child { border-right: 0; }
.grid .idx { background: linear-gradient(#fff, #ececec); font-size: 17px; text-align: center; padding: 2px 12px 0 3px; }
.grid .idx.cur { background: #ffd080; color: #8a1a80; }
.grid td.thick { border-left: 2px solid #111; }
.grid td.ctr { text-align: center; }
.gr { font-weight: bold; font-size: 16px; }
.grid td.name { padding: 2px 0 0 3px; }
.grid td.desc { padding: 2px 0 0 3px; }
.lh18 { line-height: 18px; }
.grid td.shape { text-align: center; padding: 0; vertical-align: top; }
.grid td.shape.act { background: #aee9d6; }
.len { display: block; color: #ee1c1c; font-family: "Liberation Mono", monospace; font-size: 15px; line-height: 18px; margin: 10px 0 0 3px; }
.rod { width: 224px; height: 3px; background: #000; margin: 0 0 0 35px; }
.hook svg { margin: 4px 0 0 56px; }
.svg270 { font-family: "Liberation Mono", monospace; font-size: 15px; text-anchor: middle; fill: #111; }
.svg12 { font-family: "Liberation Mono", monospace; font-size: 10px; font-weight: bold; fill: #222; }
.vbar { grid-row: 1 / 3; grid-column: 2; position: relative; display: flex; flex-direction: column; align-items: center; padding-top: 10px; background: #fff; }
.vthumb { width: 22px; height: 58px; margin-top: 64px; background: #c8c8c8; }
.vdown { margin-top: 62px; }
.grid-bar { height: 23px; padding: 0 6px 0 8px; }
.gthumb { width: 657px; height: 23px; margin: 0 auto 0 6px; background: #c8c8c8; }

/* bottom tabs */
.tabs { display: flex; height: 7px; padding: 1px 0 0 12px; gap: 4px; }
.tab { display: block; height: 6px; background: #fafafa; border: 1px solid #bcbcbc; border-bottom: 0; }
.tab i { width: 14px; height: 3px; margin: 1px 0 0 4px; background: #333; }
.w116 { width: 116px; } .w148 { width: 148px; } .w71 { width: 71px; } .w1243 { width: 1243px; }
.tabs .w101 { width: 101px; }

/* Windows watermark */
.activate { position: absolute; left: 1328px; top: 811px; color: rgba(110, 110, 110, .55); white-space: nowrap; pointer-events: none; }
.act1 { font-family: "Noto Sans", "Noto Sans CJK SC", sans-serif; font-size: 29px; line-height: 36px; }
.act2 { font-family: "Noto Sans", "Noto Sans CJK SC", sans-serif; font-size: 20px; line-height: 32px; margin-top: 1px; }
```
